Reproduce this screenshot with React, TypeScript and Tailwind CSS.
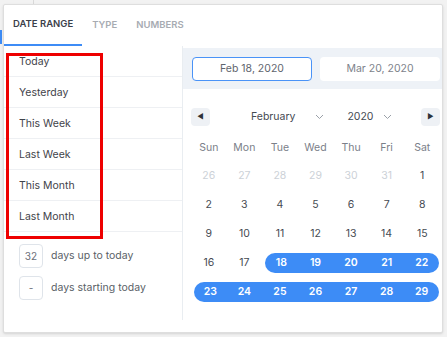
import React from 'react';

const presets = ['Today', 'Yesterday', 'This Week', 'Last Week', 'This Month', 'Last Month'];
const weekdays = ['Sun', 'Mon', 'Tue', 'Wed', 'Thu', 'Fri', 'Sat'];

type Day = { n: number; muted?: boolean };

const weeks: Day[][] = [
  [{ n: 26, muted: true }, { n: 27, muted: true }, { n: 28, muted: true }, { n: 29, muted: true }, { n: 30, muted: true }, { n: 31, muted: true }, { n: 1 }],
  [2, 3, 4, 5, 6, 7, 8].map((n) => ({ n })),
  [9, 10, 11, 12, 13, 14, 15].map((n) => ({ n })),
  [16, 17, 18, 19, 20, 21, 22].map((n) => ({ n })),
  [23, 24, 25, 26, 27, 28, 29].map((n) => ({ n })),
];

// selected range: Feb 18 -> Feb 29
const inRange = (d: Day) => !d.muted && d.n >= 18 && d.n <= 29;

function Chevron() {
  return (
    <svg width="9" height="6" viewBox="0 0 9 6" fill="none" stroke="#9aa0a8" strokeWidth="1">
      <path d="M1 1l3.5 3.5L8 1" />
    </svg>
  );
}

function DayCell({ day, start, end }: { day: Day; start: boolean; end: boolean }) {
  const selected = inRange(day);
  if (selected) {
    return (
      <div className="flex h-[29px] items-center">
        <div
          className={
            'flex h-5 flex-1 items-center justify-center bg-[#3d8cf6] text-[10.5px] font-semibold text-white ' +
            (start ? 'ml-[3px] rounded-l-full ' : '') +
            (end ? 'mr-[1px] rounded-r-full' : '')
          }
        >
          {day.n}
        </div>
      </div>
    );
  }
  return (
    <div
      className={
        'flex h-[29px] items-center justify-center text-[10.5px] ' +
        (day.muted ? 'text-[#ccd1d7]' : 'text-[#454a52]')
      }
    >
      {day.n}
    </div>
  );
}

export default function App() {
  return (
    <div className="relative h-[337px] w-[447px] overflow-hidden bg-[#f2f2f2] font-['Inter',sans-serif]">
      {/* bits of the page underneath */}
      <div className="absolute left-[33px] top-0 h-[4px] w-px bg-[#d9d9d9]" />
      <div className="absolute left-0 top-[30px] h-[14px] w-[2px] bg-[#3d8cf6]" />

      {/* popup */}
      <div className="absolute left-[3px] top-[4px] flex h-[329px] w-[440px] flex-col rounded-[2px] border border-[#dedede] bg-white pb-[12px] shadow-sm">
        {/* tabs */}
        <div className="flex h-[41px] items-stretch text-[9.5px] font-semibold">
          <div className="flex items-center border-b-2 border-[#3d8cf6] pl-[9px] pr-[9px] text-[#3b404a]">DATE RANGE</div>
          <div className="flex items-center px-[10px] text-[#a7abb2]">TYPE</div>
          <div className="flex items-center px-[9px] text-[#a7abb2]">NUMBERS</div>
        </div>

        <div className="flex flex-1">
          {/* presets */}
          <div className="w-[180px] border-r border-[#e9edf1]">
            {presets.map((p) => (
              <div key={p} className="flex h-[31px] items-center border-b border-[#eef0f3] pl-[15px] pt-[1px] text-[10.5px] text-[#3f434a]">
                {p}
              </div>
            ))}
            <div className="flex flex-col gap-2 pl-[15px] pt-3">
              <div className="flex items-center gap-2">
                <div className="flex h-6 w-6 items-center justify-center rounded border border-[#dfe4ea] text-[10px] text-[#6b7079]">32</div>
                <span className="text-[10.5px] text-[#5a5f67]">days up to today</span>
              </div>
              <div className="flex items-center gap-2">
                <div className="flex h-6 w-6 items-center justify-center rounded border border-[#dfe4ea] text-[10px] text-[#6b7079]">-</div>
                <span className="text-[10.5px] text-[#5a5f67]">days starting today</span>
              </div>
            </div>
          </div>

          {/* calendar */}
          <div className="flex flex-1 flex-col">
            <div className="mt-[2px] flex h-[41px] items-center gap-2 bg-[#eef2f7] pl-[9px] pr-[2px]">
              <div className="flex h-6 w-[120px] items-center justify-center rounded border border-[#4a93f7] bg-white text-[10.5px] text-[#5f656e]">
                Feb 18, 2020
              </div>
              <div className="flex h-6 w-[120px] items-center justify-center rounded bg-white text-[10.5px] text-[#7d838b]">
                Mar 20, 2020
              </div>
            </div>

            <div className="flex flex-1 flex-col pl-[8px] pr-[2px]">
              <div className="mt-[19px] flex h-[18px] items-center">
                <div className="flex h-[18px] w-[19px] items-center justify-center rounded bg-[#eef1f5] text-[7px] text-[#2d3138]">◀</div>
                <div className="flex flex-1 items-center pl-[41px] text-[10.5px] text-[#454a52]">
                  <span>February</span>
                  <span className="ml-[20px]"><Chevron /></span>
                  <span className="ml-[23px]">2020</span>
                  <span className="ml-[10px]"><Chevron /></span>
                </div>
                <div className="flex h-[18px] w-[19px] items-center justify-center rounded bg-[#eef1f5] text-[7px] text-[#2d3138]">▶</div>
              </div>

              <div className="mt-[13px] grid grid-cols-7">
                {weekdays.map((w) => (
                  <div key={w} className="flex h-[18px] items-center justify-center text-[10.5px] text-[#7b8089]">
                    {w}
                  </div>
                ))}
              </div>

              <div className="mt-[4px] flex flex-col">
                {weeks.map((week, wi) => (
                  <div key={wi} className="grid grid-cols-7">
                    {week.map((d, di) => {
                      const sel = inRange(d);
                      const start = sel && (di === 0 || !inRange(week[di - 1]));
                      const end = sel && (di === 6 || !inRange(week[di + 1]));
                      return <DayCell key={di} day={d} start={start} end={end} />;
                    })}
                  </div>
                ))}
              </div>
            </div>
          </div>
        </div>
      </div>

      {/* red annotation box */}
      <div className="absolute left-[6px] top-[53px] h-[186px] w-[97px] border-[3px] border-[#ee0000]" />
    </div>
  );
}
